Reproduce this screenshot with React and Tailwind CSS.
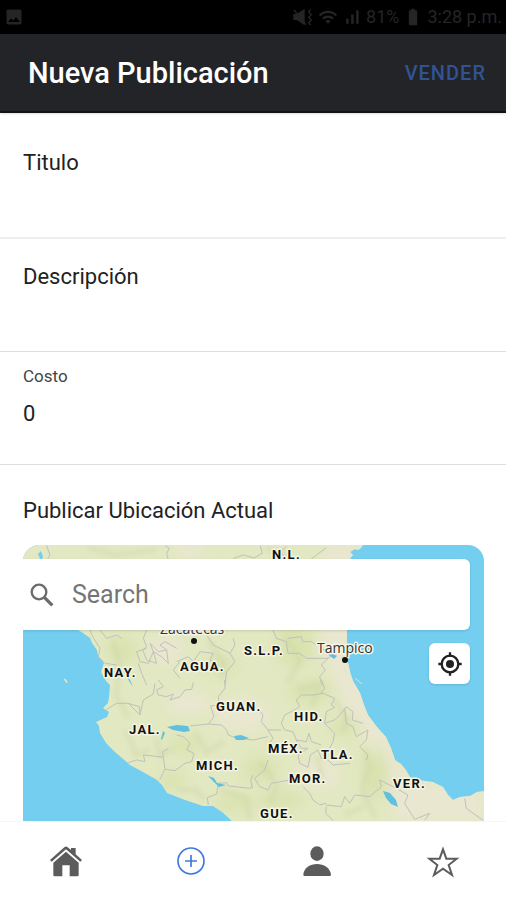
import React from "react";
import { MdBatteryFull, MdWifi, MdSignalCellularAlt, MdImage } from "react-icons/md";

const STATES = [
  ["N.L.", 272, 559],
  ["S.L.P.", 244, 655],
  ["NAY.", 104, 677],
  ["AGUA.", 180, 671],
  ["GUAN.", 216, 711],
  ["HID.", 294, 721],
  ["JAL.", 129, 734],
  ["MÉX.", 268, 753],
  ["TLA.", 321, 759],
  ["MICH.", 196, 770],
  ["MOR.", 289, 783],
  ["VER.", 393, 788],
  ["GUE.", 260, 818],
];

function MuteIcon() {
  return (
    <svg viewBox="0 0 66 54" className="h-[18px] w-[22px]" fill="none" stroke="currentColor" strokeWidth="4" aria-hidden="true">
      <path d="M4 18H14L38 2V52L14 36H4Z" fill="currentColor" stroke="none" />
      <path d="M6 6L42 50" />
      <path d="M56 4L50 12L58 20L50 28L58 36L50 44L56 52" />
    </svg>
  );
}

function StatusBar() {
  return (
    <div className="flex h-[34px] items-center justify-between bg-black px-1 text-[#252525]">
      <MdImage className="size-5" />
      <div className="flex items-center gap-1 text-lg leading-6">
        <MuteIcon />
        <MdWifi className="size-5" />
        <MdSignalCellularAlt className="size-5" />
        <span>81%</span>
        <MdBatteryFull className="size-5" />
        <span>3:28 p.m.</span>
      </div>
    </div>
  );
}

function MapCanvas() {
  return (
    <svg viewBox="23 545 461 276" preserveAspectRatio="xMidYMid slice" className="absolute inset-0 size-full" role="img" aria-label="Mapa">
      <defs>
        <clipPath id="land">
          <path d="M23 545H363L361 548L358 550L355 549L350 552L353 555L350 558L352 562L347 600V658L350 672L353 681L360 693L364 705L368 715L377 727L386 737L391 748L395 760L401 764L406 770L410 777L418 780L433 782L443 787L448 795L453 800L460 797L470 796L477 792L484 791V821H232L222 812L213 806L203 806L185 800L167 793L162 785L157 780L143 772L130 765L115 752L106 743L100 733L99 726L96 722L107 717L109 712L103 708L108 703L109 697L110 685L106 681L101 672L104 663L98 656L97 650L92 643L90 638L83 633L78 630L60 600L40 575L23 560Z" />
        </clipPath>
        <filter id="soft" x="-50%" y="-50%" width="200%" height="200%">
          <feGaussianBlur stdDeviation="6" />
        </filter>
        <filter id="relief" x="-50%" y="-50%" width="200%" height="200%">
          <feGaussianBlur stdDeviation="2" />
        </filter>
      </defs>
      <rect x="-500" y="0" width="1500" height="1500" fill="#73cef0" />
      <g clipPath="url(#land)">
        <rect x="23" y="545" width="461" height="276" fill="#e2e8c1" />
        <g filter="url(#soft)" fill="#e9e7d0">
          <path d="M325 545H363V680L390 745L410 780L484 790V821H395L380 760L340 700L320 640Z" />
          <ellipse cx="242" cy="715" rx="28" ry="18" />
          <ellipse cx="188" cy="703" rx="22" ry="12" />
          <ellipse cx="318" cy="775" rx="22" ry="14" />
          <ellipse cx="165" cy="650" rx="18" ry="14" />
          <ellipse cx="190" cy="551" rx="15" ry="8" />
        </g>
        <g filter="url(#soft)" fill="#d7e1ab" opacity=".8">
          <ellipse cx="295" cy="645" rx="18" ry="22" />
          <ellipse cx="310" cy="691" rx="20" ry="12" />
          <ellipse cx="122" cy="650" rx="14" ry="13" />
          <ellipse cx="220" cy="665" rx="15" ry="9" />
          <ellipse cx="375" cy="775" rx="13" ry="25" />
          <ellipse cx="260" cy="770" rx="17" ry="12" />
          <ellipse cx="172" cy="780" rx="12" ry="8" />
          <ellipse cx="235" cy="803" rx="20" ry="8" />
          <ellipse cx="345" cy="727" rx="13" ry="9" />
          <ellipse cx="280" cy="800" rx="22" ry="9" />
          <ellipse cx="185" cy="745" rx="15" ry="8" />
        </g>
        <g filter="url(#relief)" fill="none" stroke="#c9d1a3" strokeWidth="4" opacity=".4">
          <path d="M112 640L120 665L116 695L128 717M126 730L136 755L150 750M156 739L160 756L174 748M195 732L207 752L224 742M208 640L224 664L222 680M260 762L277 785L270 802M365 750L369 768L362 790L375 817M298 690L320 684L312 706M286 638L300 660L288 682M220 790L246 798L250 820M317 757L322 776L310 779M178 790L196 790L204 800M335 700L347 720L342 732M345 815L365 806M88 548L117 555L157 549M266 548L290 556" />
        </g>
        <g fill="none" stroke="#c0c0bc" strokeWidth="3" strokeLinejoin="round">
          <g transform="translate(0 535) scale(.3333)">
            <path d="M140 32L150 60L142 75M495 32L508 40L500 55L505 75M700 70L730 60L759 68M270 285L278 305L300 340L295 365L315 385L350 390M300 285L320 310L350 300L365 310M440 285L430 310L440 335L428 345L440 375L470 385L460 350L450 325L475 350L500 345L480 330L495 320L530 340M500 345L505 385L485 365L460 350L445 385L420 380L410 350L440 340M610 285L640 330L690 355L705 330L700 310M690 355L705 380L680 410L675 450M530 380L565 365L580 380L600 350L640 355L630 375L655 390L640 400M540 380L520 405L540 430M415 385L425 415L440 450" />
          </g>
          <g transform="translate(0 680) scale(.3333)">
            <path d="M320 88L350 70L385 70L420 105L430 60L460 42L465 10M420 105L418 80L385 70M475 0L490 20L470 30L475 45L500 50L520 42L510 60L540 50L555 30L575 28L580 8M674 0L675 25L655 50L658 75L632 78L642 110L625 132L570 138M625 132L665 135L680 150L685 165L710 175L759 180M380 250L410 240L435 245L430 225L460 228L490 232L488 215L505 205M490 232L495 268L480 298M495 268L525 272L555 250L575 245L582 220L560 210L570 190L550 170L530 165M625 375L622 353L650 342L655 310L680 308L685 318L750 325L759 318M759 285L752 300L757 325" />
          </g>
          <g transform="translate(253 535) scale(.3333)">
            <path d="M0 70L28 55L22 32M100 35L82 50L92 65M175 72L220 38M60 285L70 310L100 320L105 355L140 355L160 370L225 370L250 350M105 310L145 305L150 320L175 320L190 330M225 370L205 390L217 405L200 425L207 450" />
          </g>
          <g transform="translate(253 680) scale(.3333)">
            <path d="M205 0L215 25L205 38L245 55L235 75L245 82L220 95L215 130L245 120L265 100L280 80L300 95L298 120L330 130M210 40L180 45L145 45L130 60L140 80L115 95L95 105L85 130L95 150L120 155L130 180L160 185L168 160L175 185L205 195M15 85L30 105L25 125L45 150L85 150M45 150L60 175L45 195M0 180L45 170M215 130L245 160L240 185L230 205M275 85L280 130L300 140L310 170L345 150L340 180L320 200L345 225L340 240M130 180L145 205L165 205L135 225L140 250L165 262L172 225L195 210L205 235L225 240L240 255L290 250M45 240L35 270L5 295L20 320L45 330L55 310L110 300M150 320L170 340L180 360L200 375L220 370M220 375L265 380L275 350L290 370L305 345L350 350L385 320L380 300L430 325L465 345L455 370L485 418L530 400L515 421M220 380L218 400L240 421M635 355L640 385L690 421" />
          </g>
        </g>
        <path d="M38 554L41 551L43 557L41 561Z" fill="#73cef0" />
        <path d="M125 673L130 680L133 687L129 681ZM167 727L177 725L188 726L190 731L184 732L173 730ZM161 739L163 731L165 733L162 740ZM234 736L241 735L249 738L243 740L236 740ZM208 776L214 778L217 783L226 785L219 787L215 783ZM383 791L390 793L396 800L398 807L391 804L386 798ZM317 644L322 648L337 656L334 659L325 652Z" fill="#61bfdf" />
      </g>
      <path d="M64 679L66 680L67 683Z" fill="#e4e8c5" stroke="#e4e8c5" />
      <path d="M355 678L362 684M344 668L347 674" stroke="#d8e4cb" strokeWidth="1" />
      <g fill="#111" stroke="#f5f5e3" strokeWidth="3" strokeLinejoin="round" className="font-bold tracking-widest [paint-order:stroke]" fontSize="13">
        {STATES.map(([name, x, y]) => (
          <text key={name} x={x} y={y}>{name}</text>
        ))}
      </g>
      <g fill="#333" stroke="#f5f5e8" strokeWidth="3" strokeLinejoin="round" className="[paint-order:stroke]" fontFamily="Open Sans, sans-serif" fontSize="14">
        <text x="160" y="634">Zacatecas</text>
        <text x="317" y="653">Tampico</text>
      </g>
      <circle cx="194" cy="641" r="3" fill="#111" />
      <circle cx="345" cy="660" r="3" fill="#111" />
    </svg>
  );
}

function SearchIcon() {
  return (
    <svg viewBox="0 0 72 72" className="size-6" fill="none" stroke="#6c6c6c" aria-hidden="true">
      <circle cx="27" cy="27" r="22" strokeWidth="7" />
      <path d="M43 43L67 67" strokeWidth="10" />
    </svg>
  );
}

function LocateIcon() {
  return (
    <svg viewBox="0 0 72 72" className="size-6" fill="none" stroke="#222" aria-hidden="true">
      <circle cx="36" cy="36" r="25" strokeWidth="7" />
      <circle cx="36" cy="36" r="12" fill="#222" stroke="none" />
      <path d="M36 1V14M36 58V71M1 36H14M58 36H71" strokeWidth="7" />
    </svg>
  );
}

const TABS = [
  {
    name: "Inicio",
    box: "136 83 108 108",
    drawing: (
      <g fill="#5c5c5c">
        <path d="M145 134L188 96Q193 91 198 96L208 104V98H222V117L241 134L236 139L193 102L150 139Z" />
        <path d="M155 142L193 109L231 142V179Q231 183 227 183H204V150H182V183H159Q155 183 155 179Z" />
      </g>
    ),
  },
  {
    name: "Publicar",
    box: "518 84 108 108",
    drawing: (
      <g fill="none" stroke="#3f78dd" strokeWidth="5">
        <circle cx="572" cy="138" r="39" />
        <path d="M572 120V156M554 138H590" />
      </g>
    ),
  },
  {
    name: "Perfil",
    box: "139 83 108 108",
    drawing: (
      <g fill="#5c5c5c">
        <ellipse cx="193" cy="115" rx="20" ry="22" />
        <path d="M152 178C153 158 173 146 193 146S233 158 235 178Q235 182 231 182H156Q152 182 152 178Z" />
      </g>
    ),
  },
  {
    name: "Favoritos",
    box: "519 83 108 108",
    drawing: (
      <path d="M573 102L583 130H614L590 149L600 179L573 160L546 179L556 149L532 130H563Z" fill="none" stroke="#5c5c5c" strokeWidth="6" />
    ),
  },
];

const field = "block w-full bg-transparent text-[22px] leading-7 text-[#222] outline-none";

export default function App() {
  return (
    <div className="flex min-h-screen flex-col bg-white font-[Roboto,sans-serif] text-[#222]">
      <StatusBar />
      <header className="relative flex h-[79px] items-center justify-between border-b-2 border-[#111214] bg-[#222428] pr-5 pl-7 shadow">
        <h1 className="text-[29px] leading-8 font-medium text-white">Nueva Publicación</h1>
        <button type="button" className="text-xl leading-6 font-medium tracking-wider text-[#315394]">VENDER</button>
      </header>
      <main className="flex flex-1 flex-col">
        <form className="flex flex-col">
          <div className="border-b-2 border-[#eeeeee] px-[23px] pt-9 pb-7">
            <label htmlFor="titulo" className="block text-[22px] leading-7">Titulo</label>
            <input id="titulo" type="text" className={field + " mt-1"} />
          </div>
          <div className="border-b border-[#dddddd] px-[23px] pt-6 pb-7">
            <label htmlFor="descripcion" className="block text-[22px] leading-7">Descripción</label>
            <input id="descripcion" type="text" className={field + " mt-1"} />
          </div>
          <div className="border-b border-[#dddddd] px-[23px] pt-3 pb-9">
            <label htmlFor="costo" className="block text-[17px] leading-6 text-[#444]">Costo</label>
            <input id="costo" type="text" inputMode="numeric" defaultValue="0" className={field + " mt-3"} />
          </div>
        </form>
        <h2 className="px-[23px] pt-8 pb-5 text-[22px] leading-7">Publicar Ubicación Actual</h2>
        <section className="relative mr-[22px] ml-[23px] min-h-60 flex-1 overflow-hidden rounded-t-2xl">
          <MapCanvas />
          <div className="absolute top-3.5 right-3.5 left-0 flex h-[71px] items-center rounded-r-md bg-white pl-[7px] shadow">
            <SearchIcon />
            <input type="search" aria-label="Search" placeholder="Search" className="ml-[18px] min-w-0 flex-1 bg-transparent text-[25px] leading-8 outline-none placeholder:text-[#757575]" />
          </div>
          <button type="button" aria-label="Ubicación actual" className="absolute top-[98px] right-3.5 flex size-[41px] items-center justify-center rounded-md bg-white shadow">
            <LocateIcon />
          </button>
        </section>
      </main>
      <nav className="grid h-[79px] grid-cols-4 border-t border-[#f6f6f6] bg-white pl-0.5">
        {TABS.map((tab) => (
          <button key={tab.name} type="button" aria-label={tab.name} className="flex items-center justify-center">
            <svg viewBox={tab.box} className="size-9" aria-hidden="true">{tab.drawing}</svg>
          </button>
        ))}
      </nav>
    </div>
  );
}
